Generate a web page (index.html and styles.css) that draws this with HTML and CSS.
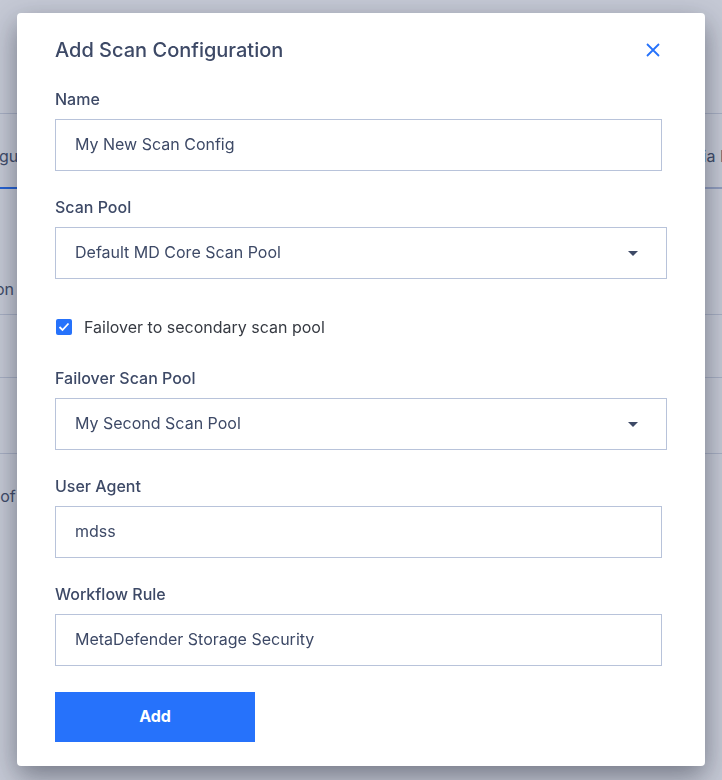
FILE: index.html
```html
<!DOCTYPE html>
<html>
<head>
	<meta charset="utf-8">
	<title>Add Scan Configuration</title>
	<link rel="stylesheet" href="styles.css">
</head>
<body>
	<div class="page">
		<div class="page-head"></div>
		<div class="tabs">
			<div class="tab active">Scan Configuration</div>
			<div class="tab right">Media Files</div>
		</div>
		<div class="row row-a"><span class="cell">Configuration</span></div>
		<div class="row row-b"></div>
		<div class="row row-c"></div>
		<div class="row row-d"><span class="cell">Number of</span></div>
	</div>

	<div class="overlay">
		<div class="modal">
			<div class="modal-head">
				<h2>Add Scan Configuration</h2>
				<button class="close" type="button" aria-label="Close">
					<svg width="14" height="14" viewBox="0 0 14 14">
						<path d="M1 1 L13 13 M13 1 L1 13" stroke="#2672fb" stroke-width="1.8" fill="none"/>
					</svg>
				</button>
			</div>
			<form class="form">
				<div class="field">
					<label for="name">Name</label>
					<input type="text" id="name" class="text" value="My New Scan Config">
				</div>
				<div class="field">
					<label>Scan Pool</label>
					<div class="select">Default MD Core Scan Pool<span class="arrow"></span></div>
				</div>
				<div class="check-row">
					<span class="checkbox">
						<svg width="12" height="10" viewBox="0 0 12 10">
							<path d="M1.5 5 L4.5 8 L10.5 1.5" stroke="#fff" stroke-width="1.8" fill="none"/>
						</svg>
					</span>
					<span class="check-label">Failover to secondary scan pool</span>
				</div>
				<div class="field">
					<label>Failover Scan Pool</label>
					<div class="select">My Second Scan Pool<span class="arrow"></span></div>
				</div>
				<div class="field">
					<label for="agent">User Agent</label>
					<input type="text" id="agent" class="text" value="mdss">
				</div>
				<div class="field">
					<label for="rule">Workflow Rule</label>
					<input type="text" id="rule" class="text" value="MetaDefender Storage Security">
				</div>
				<div>
					<button type="button" class="btn">Add</button>
				</div>
			</form>
		</div>
	</div>
</body>
</html>
```

FILE: styles.css
```css
body{
	margin: 0;
	font-family: Inter, Roboto, "Liberation Sans", sans-serif;
	font-size: 16px;
	background-color: #fff;
	height: 780px;
	overflow: hidden;
}
/* page behind the dialog */
.page{
	color: #49546c;
	overflow: hidden;
}
.page-head{
	height: 113px;
	border-bottom: 1px solid #d6dbe6;
}
.tabs{
	display: flex;
	justify-content: space-between;
	height: 73px;
	border-bottom: 2px solid #b7c3e0;
}
.tab{
	line-height: 84px;
	font-size: 16px;
	white-space: nowrap;
}
.tab.active{
	margin-left: -84px;
	border-bottom: 2px solid #2672fb;
	margin-bottom: -2px;
}
.tab.right{
	width: 120px;
	margin-right: -67px;
}
.row{
	border-bottom: 1px solid #d6dbe6;
	font-size: 16px;
	white-space: nowrap;
}
.cell{
	display: inline-block;
	margin-left: -89px;
}
.row-a{
	height: 125px;
	line-height: 200px;
}
.row-b{
	height: 62px;
}
.row-c{
	height: 75px;
}
.row-d{
	height: 80px;
	line-height: 84px;
	border-bottom: none;
}
.row-d .cell{
	margin-left: -65px;
}

/* dialog */
.overlay{
	position: fixed;
	top: 0;
	left: 0;
	right: 0;
	bottom: 0;
	background-color: rgba(40, 55, 100, 0.27);
	padding-top: 13px;
}
.modal{
	width: 688px;
	margin: 0 auto;
	box-sizing: border-box;
	background-color: #fff;
	border-radius: 4px;
	padding: 25px 38px 24px;
	box-shadow: 0 10px 28px rgba(15, 20, 35, 0.45);
	color: #3d4966;
}
.modal-head{
	display: flex;
	justify-content: space-between;
	align-items: center;
	height: 24px;
	margin-bottom: 27px;
}
h2{
	margin: 0;
	font-size: 20px;
	font-weight: 500;
	line-height: 24px;
}
.close{
	border: none;
	background: none;
	padding: 0;
	margin-right: 7px;
	width: 14px;
	height: 14px;
	display: flex;
}
.form{
	display: flex;
	flex-direction: column;
	gap: 26px;
}
.field label{
	display: block;
	font-weight: 500;
	line-height: 20px;
	margin-bottom: 10px;
}
.text{
	display: block;
	box-sizing: border-box;
	width: 607px;
	height: 52px;
	margin: 0;
	border: 1px solid #b8c3da;
	border-radius: 0;
	padding: 0 19px 2px;
	font-family: inherit;
	font-size: 16px;
	color: #3d4966;
	outline: none;
}
.select{
	display: flex;
	justify-content: space-between;
	align-items: center;
	box-sizing: border-box;
	height: 52px;
	border: 1px solid #b8c3da;
	padding: 0 28px 2px 19px;
}
.arrow{
	width: 0;
	height: 0;
	border-left: 5px solid transparent;
	border-right: 5px solid transparent;
	border-top: 5px solid #3d4966;
	margin-top: 2px;
}
.check-row{
	display: flex;
	align-items: center;
	height: 20px;
	padding: 12px 0 5px 1px;
}
.checkbox{
	width: 16px;
	height: 16px;
	border-radius: 2px;
	background-color: #2672fb;
	display: flex;
	align-items: center;
	justify-content: center;
	margin-right: 12px;
}
.check-label{
	color: #363a42;
}
.btn{
	width: 200px;
	height: 50px;
	border: none;
	padding: 0 0 3px;
	background-color: #2672fb;
	color: #fff;
	font-family: inherit;
	font-size: 16px;
	font-weight: bold;
}
```
